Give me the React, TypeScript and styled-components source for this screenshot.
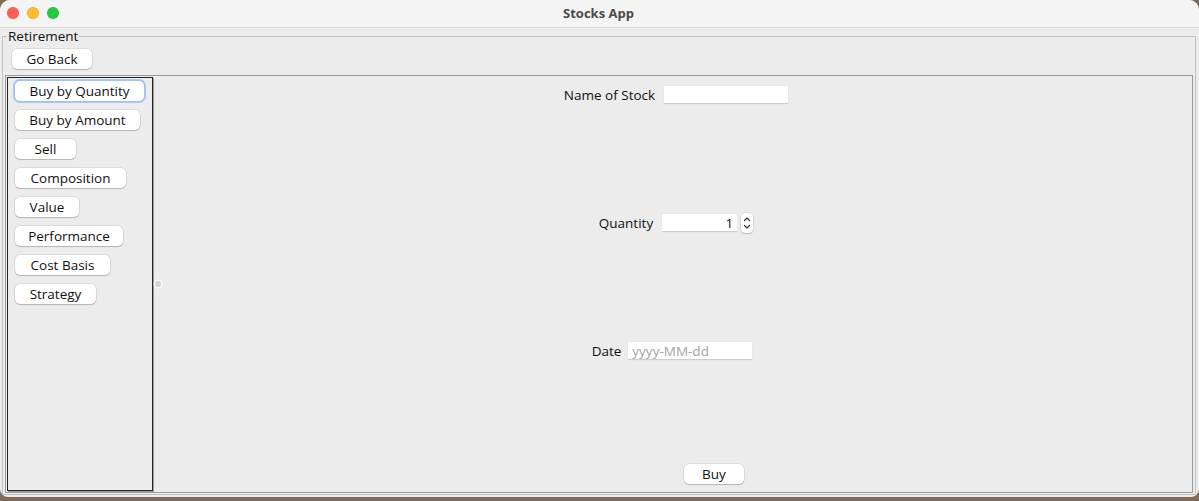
import React from "react";
import styled, { createGlobalStyle, css } from "styled-components";

const Global = createGlobalStyle`
  html, body { margin: 0; padding: 0; background: #7d6a58; }
  body { font-family: "Open Sans", "Liberation Sans", sans-serif; width: 1199px; height: 501px; overflow: hidden; }
  #root { height: 501px; }
`;

const Window = styled.div`
  width: 1199px;
  height: 497px;
  display: flex;
  flex-direction: column;
  background: #ececec;
  border-radius: 10px 10px 8px 8px;
  overflow: hidden;
`;

const TitleBar = styled.div`
  height: 27px;
  flex: none;
  background: #f4f4f4;
  border-bottom: 1px solid #d9d9d9;
  display: flex;
  align-items: center;
  justify-content: center;
  position: relative;
`;

const Lights = styled.div`
  position: absolute;
  left: 7px;
  top: 7px;
  display: flex;
  gap: 8px;
`;

const Light = styled.span<{ $c: string }>`
  width: 12px;
  height: 12px;
  border-radius: 50%;
  background: ${(p) => p.$c};
  box-shadow: inset 0 0 0 0.5px rgba(0, 0, 0, 0.12);
`;

const Title = styled.div`
  font-family: "Open Sans", "Liberation Sans", sans-serif;
  font-weight: 700;
  font-size: 13px;
  color: #4a4a4a;
  margin-left: -2px;
  margin-top: -1px;
`;

const Body = styled.div`
  flex: 1;
  display: flex;
  flex-direction: column;
  padding: 0 3px 2px 2px;
`;

const Group = styled.fieldset`
  flex: 1;
  margin: 0;
  padding: 0;
  min-width: 0;
  border: 1px solid #c2c2c2;
  display: flex;
  flex-direction: column;
`;

const Legend = styled.legend`
  margin-left: 4px;
  padding: 0 1px;
  font-size: 13.5px;
  line-height: 16px;
  color: #111111;
`;

const Button = styled.button<{ $w: number; $focus?: boolean }>`
  width: ${(p) => p.$w}px;
  height: 20px;
  flex: none;
  padding: 0;
  border: none;
  border-radius: 5px;
  background: #ffffff;
  font-family: "Open Sans", "Liberation Sans", sans-serif;
  font-size: 13.5px;
  line-height: 20px;
  color: #111111;
  text-align: center;
  box-shadow: 0 0 0 0.5px rgba(0, 0, 0, 0.14), 0 1px 1px rgba(0, 0, 0, 0.18);
  ${(p) =>
    p.$focus &&
    css`
      box-shadow: 0 0 0 1px #9cc4f4, 0 0 0 2px rgba(120, 170, 235, 0.55);
    `}
`;

const GoBack = styled(Button)`
  margin: 5px 0 0 9px;
`;

const Panel = styled.div`
  flex: 1;
  margin: 6px 2px 1px 2px;
  border: 1px solid #9c9c9c;
  padding: 1px;
  display: grid;
  grid-template-columns: 146px 8px 1fr;
  min-height: 0;
`;

const Sidebar = styled.div`
  border: 1px solid #262626;
  box-shadow: 1px 1px 0 #9a9a9a;
  padding: 3px 7px;
  display: flex;
  flex-direction: column;
  align-items: flex-start;
  gap: 9px;
`;

const Divider = styled.div`
  display: flex;
  align-items: center;
  justify-content: center;
`;

const Grip = styled.span`
  width: 6px;
  height: 6px;
  margin-left: 1px;
  border-radius: 50%;
  background: #d4d4d4;
  box-shadow: 0 0 0 1.5px #f8f8f8;
`;

const Form = styled.div`
  display: flex;
  flex-direction: column;
  align-items: center;
  padding-top: 8px;
`;

const Row = styled.div<{ $top: number; $gap: number; $shift?: number }>`
  height: 20px;
  margin-top: ${(p) => p.$top}px;
  display: flex;
  align-items: center;
  gap: ${(p) => p.$gap}px;
  margin-left: ${(p) => (p.$shift && p.$shift > 0 ? p.$shift : 0)}px;
  margin-right: ${(p) => (p.$shift && p.$shift < 0 ? -p.$shift : 0)}px;
`;

const Label = styled.span`
  font-size: 13.5px;
  color: #111111;
`;

const Field = styled.div<{ $w: number; $right?: boolean; $ph?: boolean }>`
  width: ${(p) => p.$w}px;
  height: 18px;
  box-sizing: border-box;
  background: #ffffff;
  border-bottom: 1px solid #cdcdcd;
  box-shadow: 0 0 0 0.5px #e4e4e4;
  font-size: 13.5px;
  line-height: 18px;
  padding: 0 4px;
  text-align: ${(p) => (p.$right ? "right" : "left")};
  color: ${(p) => (p.$ph ? "#a3a3a3" : "#111111")};
`;

const Spinner = styled.div`
  width: 12px;
  height: 20px;
  margin-left: -5px;
  border-radius: 4px;
  background: #ffffff;
  box-shadow: 0 0 0 0.5px rgba(0, 0, 0, 0.15), 0 1px 1px rgba(0, 0, 0, 0.15);
  display: flex;
  align-items: center;
  justify-content: center;
`;

const sideButtons: [string, number][] = [
  ["Buy by Quantity", 129],
  ["Buy by Amount", 125],
  ["Sell", 61],
  ["Composition", 111],
  ["Value", 64],
  ["Performance", 108],
  ["Cost Basis", 95],
  ["Strategy", 81],
];

export default function App() {
  return (
    <>
      <Global />
      <Window>
        <TitleBar>
          <Lights>
            <Light $c="#fe5f57" />
            <Light $c="#febc2e" />
            <Light $c="#28c840" />
          </Lights>
          <Title>Stocks App</Title>
        </TitleBar>
        <Body>
          <Group>
            <Legend>Retirement</Legend>
            <GoBack $w={80}>Go Back</GoBack>
            <Panel>
              <Sidebar>
                {sideButtons.map(([t, w], i) => (
                  <Button key={t} $w={w} $focus={i === 0}>
                    {t}
                  </Button>
                ))}
              </Sidebar>
              <Divider>
                <Grip />
              </Divider>
              <Form>
                <Row $top={0} $gap={9}>
                  <Label>Name of Stock</Label>
                  <Field $w={124} />
                </Row>
                <Row $top={108} $gap={9}>
                  <Label>Quantity</Label>
                  <Field $w={75} $right>
                    1
                  </Field>
                  <Spinner>
                    <svg width="8" height="16" viewBox="0 0 8 16" fill="none" stroke="#333" strokeWidth="1.2" strokeLinecap="round" strokeLinejoin="round">
                      <path d="M1.5 5.5 L4 3 L6.5 5.5" />
                      <path d="M1.5 10.5 L4 13 L6.5 10.5" />
                    </svg>
                  </Spinner>
                </Row>
                <Row $top={108} $gap={7} $shift={-8}>
                  <Label>Date</Label>
                  <Field $w={124} $ph>
                    yyyy-MM-dd
                  </Field>
                </Row>
                <Row $top={103} $gap={0} $shift={76}>
                  <Button $w={60}>Buy</Button>
                </Row>
              </Form>
            </Panel>
          </Group>
        </Body>
      </Window>
    </>
  );
}
